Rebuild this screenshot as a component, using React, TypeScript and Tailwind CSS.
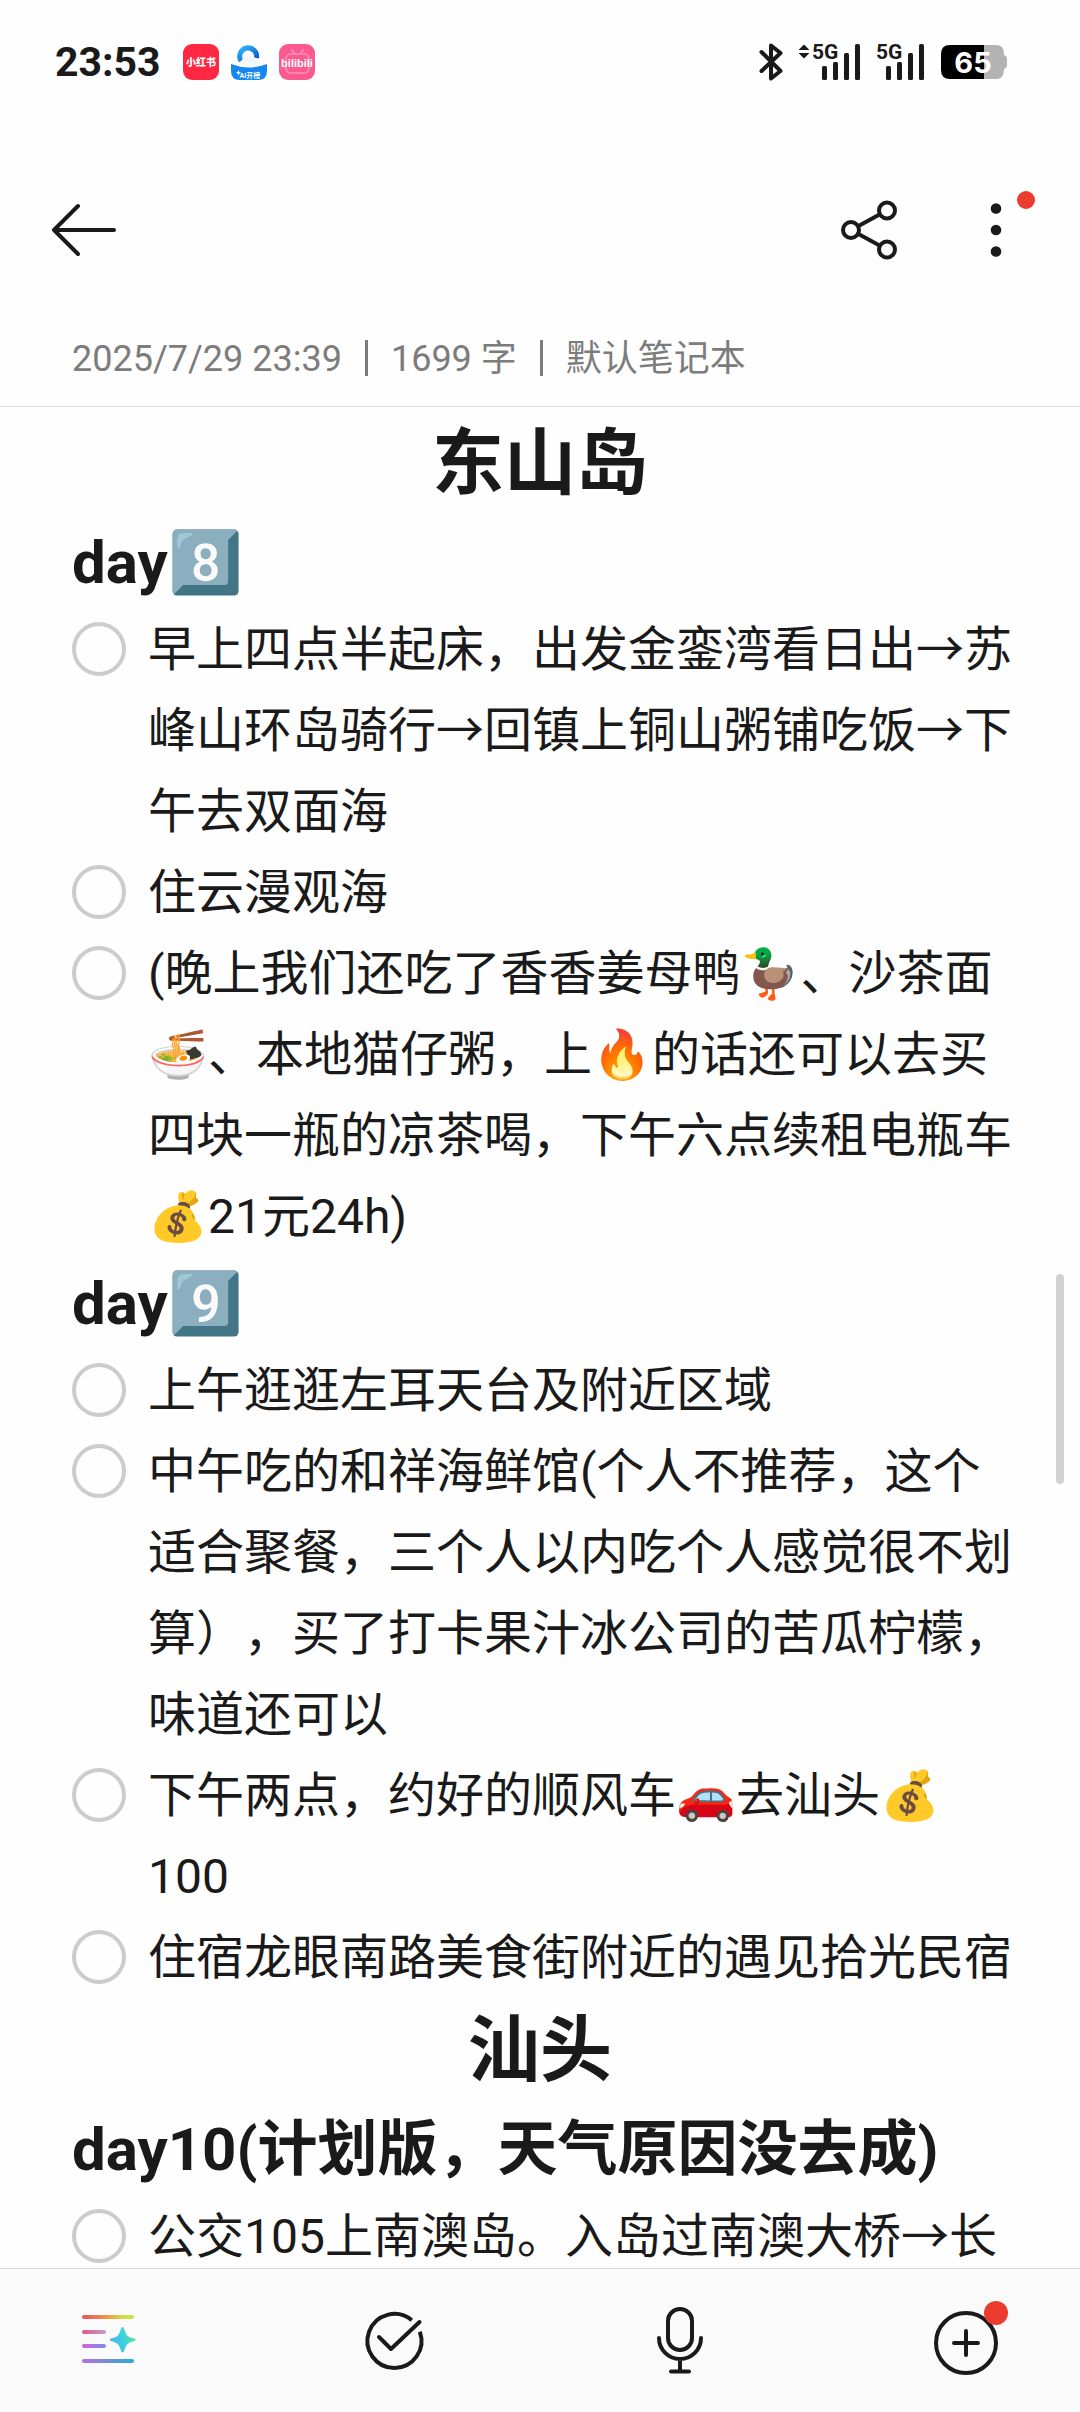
import React from 'react';

type Block =
  | { kind: 'title'; text: string }
  | { kind: 'day'; text: string }
  | { kind: 'todo'; text: string };

const blocks: Block[] = [
  { kind: 'title', text: '东山岛' },
  { kind: 'day', text: 'day8️⃣' },
  { kind: 'todo', text: '早上四点半起床，出发金銮湾看日出→苏峰山环岛骑行→回镇上铜山粥铺吃饭→下午去双面海' },
  { kind: 'todo', text: '住云漫观海' },
  { kind: 'todo', text: '(晚上我们还吃了香香姜母鸭🦆、沙茶面🍜、本地猫仔粥，上🔥的话还可以去买四块一瓶的凉茶喝，下午六点续租电瓶车💰21元24h)' },
  { kind: 'day', text: 'day9️⃣' },
  { kind: 'todo', text: '上午逛逛左耳天台及附近区域' },
  { kind: 'todo', text: '中午吃的和祥海鲜馆(个人不推荐，这个适合聚餐，三个人以内吃个人感觉很不划算），买了打卡果汁冰公司的苦瓜柠檬，味道还可以' },
  { kind: 'todo', text: '下午两点，约好的顺风车🚗去汕头💰100' },
  { kind: 'todo', text: '住宿龙眼南路美食街附近的遇见拾光民宿' },
  { kind: 'title', text: '汕头' },
  { kind: 'day', text: 'day10(计划版，天气原因没去成)' },
  { kind: 'todo', text: '公交105上南澳岛。入岛过南澳大桥→长' },
];

const Signal: React.FC<{ arrows?: boolean }> = ({ arrows }) => (
  <svg
    className="overflow-visible"
    width={arrows ? 62 : 48}
    height="38"
    viewBox={arrows ? '-14 0 62 38' : '0 0 48 38'}
    fill="#1a1a1a"
  >
    {arrows && <path d="M-9 1.5 L-4 6.5 V7 H-14 V6.5 Z M-9 15.5 L-4 10.5 V10 H-14 V10.5 Z" />}
    <text x="-1" y="16" fontSize="21" fontWeight="700" fontFamily="'Roboto', sans-serif">5G</text>
    <rect x="9" y="23" width="5" height="14" rx="1.5" />
    <rect x="20" y="19" width="5" height="18" rx="1.5" />
    <rect x="31" y="10" width="5" height="27" rx="1.5" />
    <rect x="42" y="1" width="5" height="36" rx="1.5" />
  </svg>
);

const StatusBar: React.FC = () => (
  <div className="flex h-[124px] items-center justify-between pl-[55px] pr-[72px]">
    <div className="flex items-center">
      <span className="text-[41px] leading-none font-bold">23:53</span>
      <div className="ml-[22px] flex gap-3">
        <svg className="overflow-visible" width="36" height="36" viewBox="0 0 36 36">
          <rect width="36" height="36" rx="9" fill="#ff2742" />
          <text x="18" y="22" textAnchor="middle" fontSize="10" fontWeight="900" fill="#fff" fontFamily="'Noto Sans CJK SC', sans-serif">小红书</text>
        </svg>
        <svg className="overflow-visible" width="36" height="36" viewBox="0 0 36 36">
          <defs>
            <linearGradient id="ring" x1="0" y1="0" x2="1" y2="1">
              <stop offset="0" stopColor="#2bb7fa" />
              <stop offset="1" stopColor="#0d4fd0" />
            </linearGradient>
          </defs>
          <path d="M10 17 A8.5 8.5 0 1 1 25.5 14" fill="none" stroke="url(#ring)" strokeWidth="5" />
          <path d="M12 22 a4.5 4.5 0 0 1 1.500 -8 a5 5 0 0 1 9 1 a4.5 4.5 0 0 1 5 6 Z" fill="#f2f8ff" />
          <path d="M0 20 Q18 27 36 20 V27 Q36 36 27 36 H9 Q0 36 0 27 Z" fill="#1687f2" />
          <path d="M7.5 26 l0.8 2 l2 0.8 l-2 0.8 l-0.8 2 l-0.8 -2 l-2 -0.8 l2 -0.8 Z" fill="#fff" />
          <text x="19" y="34" textAnchor="middle" fontSize="7" fontWeight="700" fill="#fff" fontFamily="'Roboto', 'Noto Sans CJK SC', sans-serif">AI开榜</text>
        </svg>
        <svg className="overflow-visible" width="36" height="36" viewBox="0 0 36 36">
          <rect width="36" height="36" rx="9" fill="#fb5a90" />
          <path d="M13 6 l3 4 M24 6 l-3 4" stroke="#ff8fb6" strokeWidth="2" strokeLinecap="round" />
          <rect x="7" y="10" width="23" height="19" rx="5" fill="none" stroke="#ff86b0" strokeWidth="2" />
          <text x="18" y="23" textAnchor="middle" fontSize="11" fontWeight="700" fill="#fff" fontFamily="'Liberation Sans', sans-serif">bilibili</text>
        </svg>
      </div>
    </div>
    <div className="flex items-center">
      <svg width="24" height="38" viewBox="0 0 24 38" fill="none" stroke="#1a1a1a" strokeWidth="4" strokeLinejoin="round" strokeLinecap="round">
        <path d="M2.5 9 L21.5 28 L12 35.5 V2.5 L21.5 10 L2.5 28" />
      </svg>
      <div className="ml-4 flex gap-4">
        <Signal arrows />
        <Signal />
      </div>
      <div className="ml-4 flex items-center">
        <svg className="overflow-visible" width="67" height="34" viewBox="0 0 67 34">
          <path d="M43 0 H55 Q63 0 63 9 V10 Q66 11 66 14 V20 Q66 23 63 24 V25 Q63 34 55 34 H43 Z" fill="#b3b3b3" />
          <path d="M9 0 H43 V34 H9 Q0 34 0 25 V9 Q0 0 9 0 Z" fill="#000" />
          <text x="32" y="28" textAnchor="middle" fontSize="29" fontWeight="700" fill="#fff" fontFamily="'Inter', sans-serif">65</text>
        </svg>
      </div>
    </div>
  </div>
);

const Toolbar: React.FC = () => (
  <div className="flex h-[212px] items-center justify-between px-12">
    <button type="button" aria-label="返回">
      <svg width="72" height="72" viewBox="0 0 72 72" fill="none" stroke="#1a1a1a" strokeWidth="4" strokeLinecap="round" strokeLinejoin="round">
        <path d="M66 36 H6 M30 12 L6 36 L30 60" />
      </svg>
    </button>
    <div className="flex gap-[55px]">
      <button type="button" aria-label="分享">
        <svg width="72" height="72" viewBox="0 0 72 72" fill="none" stroke="#1a1a1a" strokeWidth="4">
          <circle cx="18" cy="36" r="8" />
          <circle cx="54" cy="16.5" r="8" />
          <circle cx="54" cy="55.5" r="8" />
          <path d="M25.5 32 L46.5 20.5 M25.5 40 L46.5 51.5" />
        </svg>
      </button>
      <button type="button" aria-label="更多">
        <svg className="overflow-visible" width="72" height="72" viewBox="0 0 72 72" fill="#1a1a1a">
          <circle cx="36" cy="14.5" r="5.3" />
          <circle cx="36" cy="36" r="5.3" />
          <circle cx="36" cy="57.5" r="5.3" />
          <circle cx="66" cy="6" r="9" fill="#eb3c2f" />
        </svg>
      </button>
    </div>
  </div>
);

const NoteBlock: React.FC<{ block: Block }> = ({ block }) => {
  if (block.kind === 'title') {
    return <h1 className="text-center text-[72px] leading-[105px] font-bold">{block.text}</h1>;
  }
  if (block.kind === 'day') {
    return <h2 className="text-[60px] leading-[93px] font-bold">{block.text}</h2>;
  }
  return (
    <label className="-mr-[6px] flex gap-[22px] text-[48px] leading-[81px]">
      <input type="checkbox" className="mt-[13px] size-[54px] shrink-0 appearance-none rounded-full border-4 border-[#cccccc] checked:bg-[#cccccc]" />
      <span>{block.text}</span>
    </label>
  );
};

const BottomBar: React.FC = () => (
  <nav className="flex h-[144px] shrink-0 items-center justify-between border-t border-[#d9d9d9] bg-[#fafafa] pl-[72px] pr-[78px]">
    <button type="button" aria-label="AI 助手">
      <svg width="72" height="72" viewBox="0 1 72 72" strokeLinecap="round" strokeWidth="4">
        <defs>
          <linearGradient id="l1" gradientUnits="userSpaceOnUse" x1="10" y1="0" x2="62" y2="0">
            <stop offset="0" stopColor="#df5560" />
            <stop offset="0.45" stopColor="#ef9346" />
            <stop offset="0.8" stopColor="#cfdf45" />
            <stop offset="1" stopColor="#bfe650" />
          </linearGradient>
          <linearGradient id="l2" gradientUnits="userSpaceOnUse" x1="10" y1="0" x2="34" y2="0">
            <stop offset="0" stopColor="#e8558a" />
            <stop offset="1" stopColor="#b9a3cd" />
          </linearGradient>
          <linearGradient id="l3" gradientUnits="userSpaceOnUse" x1="10" y1="0" x2="34" y2="0">
            <stop offset="0" stopColor="#d15fdc" />
            <stop offset="1" stopColor="#7f8df0" />
          </linearGradient>
          <linearGradient id="l4" gradientUnits="userSpaceOnUse" x1="10" y1="0" x2="62" y2="0">
            <stop offset="0" stopColor="#b66fdd" />
            <stop offset="1" stopColor="#25aed3" />
          </linearGradient>
          <linearGradient id="spark" x1="0" y1="0.7" x2="1" y2="0.3">
            <stop offset="0" stopColor="#4fb0ee" />
            <stop offset="0.5" stopColor="#3acfe6" />
            <stop offset="1" stopColor="#62e59a" />
          </linearGradient>
        </defs>
        <path d="M12 13 H60" stroke="url(#l1)" />
        <path d="M12 28 H32" stroke="url(#l2)" />
        <path d="M12 42 H32" stroke="url(#l3)" />
        <path d="M12 57 H60" stroke="url(#l4)" />
        <path d="M50.5 23 C52 23 52 25 53 27 C55 32 55.5 32.5 60.5 34 C62 34.6 63.5 34.5 63.5 35.7 C63.5 37 62 37 60.5 37.6 C55.5 39.5 55 40 53 44.5 C52 46.5 52 48.5 50.5 48.5 C49.3 48.5 49 46.5 48.2 44.5 C46.5 40 45.5 39.5 41 37.6 C39.5 37 37.8 37 37.8 35.7 C37.8 34.5 39.5 34.6 41 34 C45.5 32.5 46.5 32 48.2 27 C49 25 49.3 23 50.5 23 Z" fill="url(#spark)" />
      </svg>
    </button>
    <button type="button" aria-label="待办">
      <svg width="72" height="72" viewBox="0 0 72 72" fill="none" stroke="#1a1a1a" strokeWidth="4" strokeLinecap="round" strokeLinejoin="round">
        <path d="M53.8 15.3 A27 27 0 1 0 61.8 26.7" strokeLinecap="butt" />
        <path d="M21 32 L33 44 L61.5 17" />
      </svg>
    </button>
    <button type="button" aria-label="语音">
      <svg width="72" height="72" viewBox="0 0 72 72" fill="none" stroke="#1a1a1a" strokeWidth="4" strokeLinecap="round">
        <rect x="24" y="4" width="24" height="41" rx="12" />
        <path d="M15 33 A21 21 0 0 0 57 33 M36 54.5 V66 M27 66.5 H45" />
      </svg>
    </button>
    <button type="button" aria-label="添加">
      <svg className="overflow-visible" width="72" height="72" viewBox="0 0 72 72" fill="none" stroke="#1a1a1a" strokeWidth="4" strokeLinecap="round">
        <circle cx="36" cy="38" r="30" />
        <path d="M36 26 V50 M24 38 H48" />
        <circle cx="66" cy="8" r="12" fill="#eb3c2f" stroke="none" />
      </svg>
    </button>
  </nav>
);

const App: React.FC = () => {
  return (
    <div
      lang="zh-CN"
      className="relative flex h-screen flex-col overflow-hidden bg-[#fefefe] text-[#1a1a1a] [font-family:Roboto,'Noto_Sans_CJK_SC',sans-serif] [text-spacing-trim:space-all]"
    >
      <StatusBar />
      <Toolbar />
      <div className="flex h-[71px] shrink-0 items-start gap-[23px] border-b border-[#dedede] px-[72px] text-[36px] leading-[46px] text-[#7c7c7c]">
        <span>2025/7/29 23:39</span>
        <span className="mt-1 h-9 w-[3px] bg-[#7c7c7c]" />
        <span>1699 字</span>
        <span className="mt-1 h-9 w-[3px] bg-[#7c7c7c]" />
        <span>默认笔记本</span>
      </div>
      <main className="min-h-0 flex-1 overflow-hidden px-[72px] pt-1">
        {blocks.map((block, idx) => (
          <NoteBlock key={idx} block={block} />
        ))}
      </main>
      <div className="absolute top-[1274px] right-4 h-[210px] w-2 rounded-full bg-[#d2d2d2]" />
      <BottomBar />
    </div>
  );
};

export default App;
